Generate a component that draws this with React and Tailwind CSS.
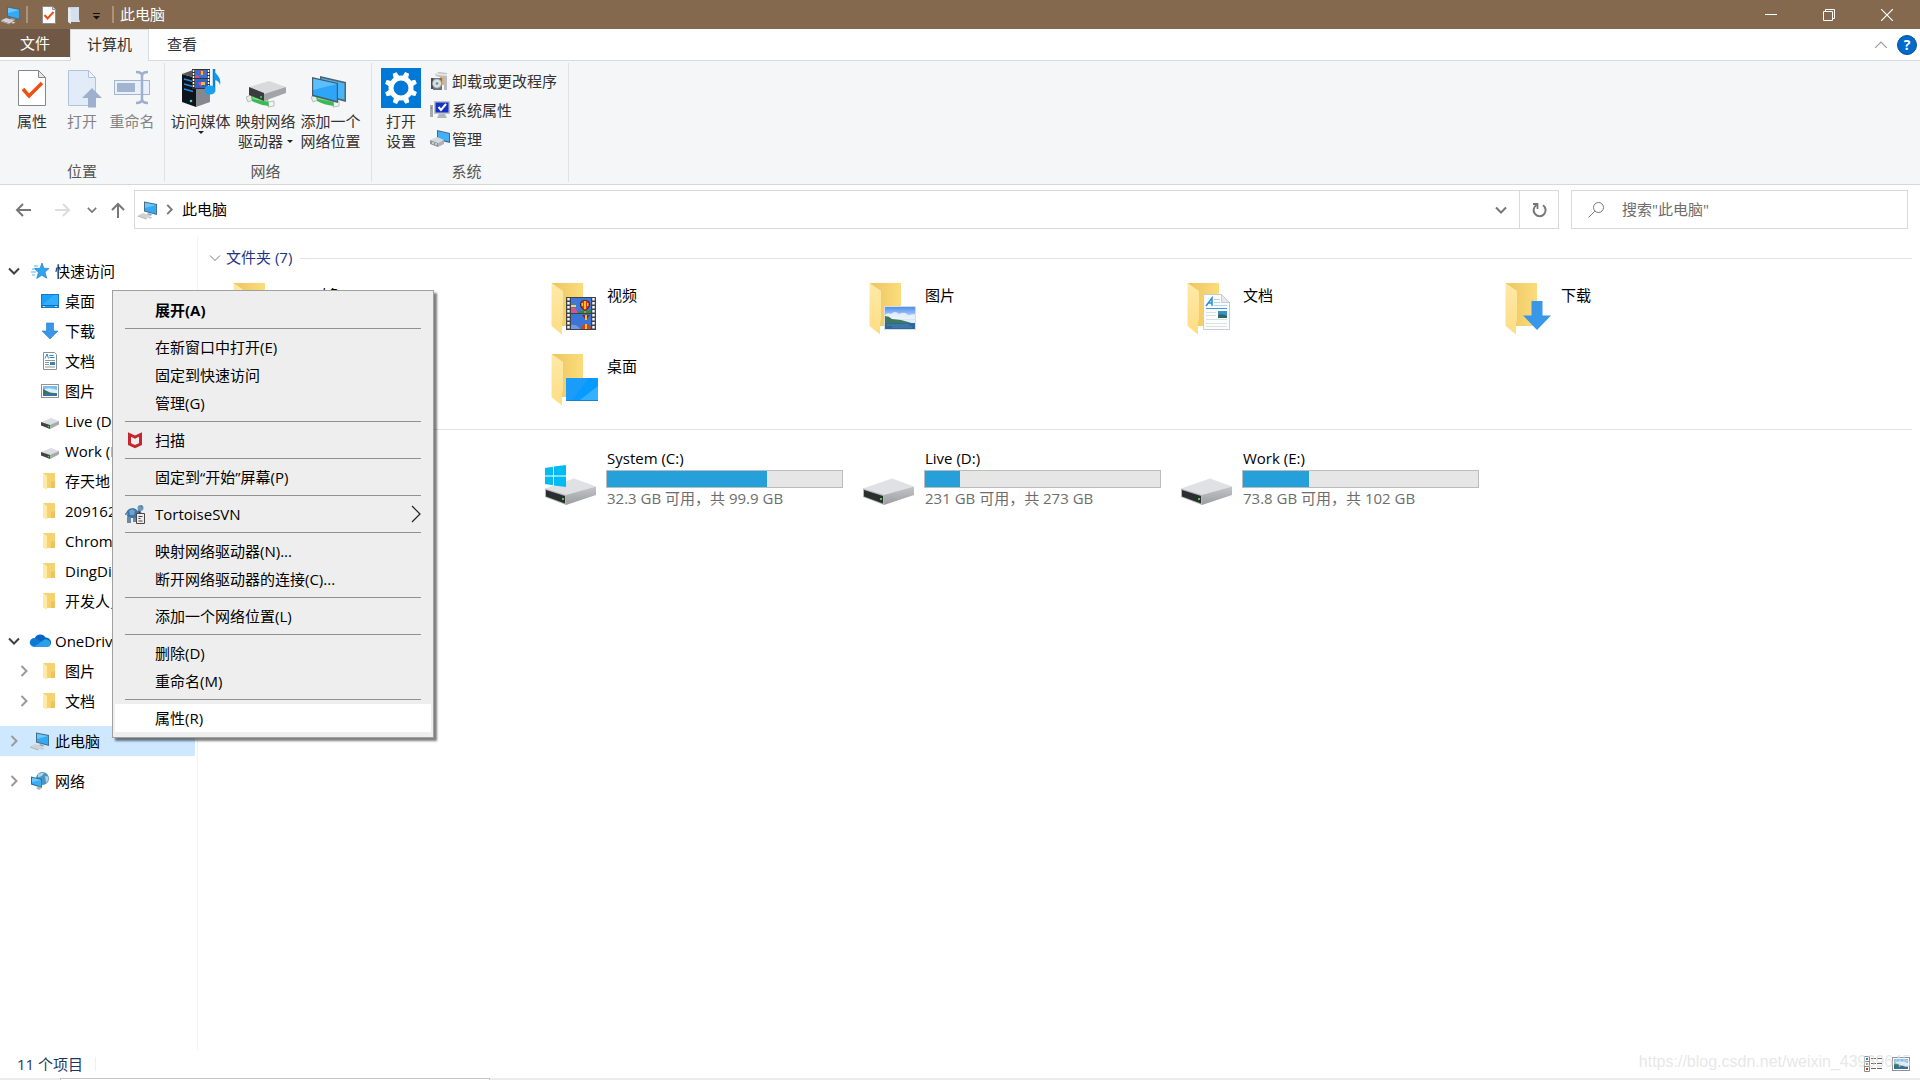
import { useState } from 'react';

/* ---------- small icons ---------- */

const PcIcon = () => (
  <svg width="20" height="20" viewBox="0 0 20 20" className="shrink-0">
    <path d="M6 1.500l13 2.500v11L6 11.500z" fill="#4a6a80" />
    <path d="M7 2.700l11.200 2.200v8.800L7 10.700z" fill="#35a9f5" />
    <path d="M7 2.700l11.200 2.200L7 8z" fill="#6cc6fb" />
    <path d="M10 13l4 1-1 2-4-1z" fill="#9aa7ae" />
    <path d="M0 15.500l5-2.500 8 2.500-4.500 3z" fill="#cfd3d6" />
    <path d="M0 15.500l8.500 3v1L0 16.500z" fill="#a9aeb2" />
    <path d="M11.500 16.500l3 .8-2 1.400-2.500-.8z" fill="#c3c8cc" />
  </svg>
);

const CheckDocIcon = () => (
  <svg width="20" height="20" viewBox="0 0 20 20">
    <path d="M3.500 1.500h10l3 3v14h-13z" fill="#fff" stroke="#8c8c8c" />
    <path d="M13.500 1.500v3h3" fill="#ddd" stroke="#8c8c8c" />
    <path d="M5.500 10l3 3.500 6-6.500" fill="none" stroke="#f04e16" strokeWidth="2" />
  </svg>
);

const PaperFolderIcon = () => (
  <svg width="20" height="20" viewBox="0 0 20 20">
    <path d="M5 2h10v14l1 1H6z" fill="#c3d3e4" />
    <path d="M4 2l3 2v15l-3-2z" fill="#e4edf6" />
    <path d="M7 4l8-2v12l1 3H7z" fill="#d4e0ed" />
  </svg>
);

const StarIcon = () => (
  <svg width="20" height="20" viewBox="0 0 20 20">
    <path d="M12 2l1.800 5.200 5.200.3-4 3.400 1.600 6.300-4.800-3-5 3.300 1.600-5.800L4.500 7.600l5.500-.3z" fill="#2fa4ec" stroke="#1880cc" strokeWidth=".7" />
    <path d="M4 5h4M2 8h3M1 11h5M2 14h3" stroke="#59b5ee" strokeWidth="1" />
  </svg>
);

const DesktopIcon = () => (
  <svg width="20" height="20" viewBox="0 0 20 20">
    <rect x="1.500" y="3.500" width="17" height="13" fill="#1ba1fb" stroke="#1579c4" />
    <path d="M2 14L14 4h4v10z" fill="#35adff" />
    <path d="M2 14.500h16" stroke="#0f6db8" />
    <path d="M3 15.500h2M15 15.500h2" stroke="#fff" strokeWidth=".8" />
  </svg>
);

const DownIcon = () => (
  <svg width="20" height="20" viewBox="0 0 20 20">
    <path d="M6.500 2h7v8h4.500l-8 8-8-8h4.500z" fill="#3a96e8" stroke="#2379c4" strokeWidth=".6" />
  </svg>
);

const DocIcon = () => (
  <svg width="20" height="20" viewBox="0 0 20 20">
    <path d="M3.500 1.500h11l2 2v15h-13z" fill="#fff" stroke="#8a8f94" />
    <path d="M5 7.500L7 3l1.500 4.500M9.500 4.500h4M9.500 6.500h5" fill="none" stroke="#2f8ac4" />
    <path d="M5 9.500h10M5 11.500h4M5 13.500h4M5 16h10" stroke="#8f979e" />
    <rect x="10" y="11" width="5" height="3" fill="#3387b5" />
  </svg>
);

const PictureIcon = () => (
  <svg width="20" height="20" viewBox="0 0 20 20">
    <rect x="1.500" y="3.500" width="17" height="13" fill="#fff" stroke="#8c939a" />
    <rect x="3" y="5" width="14" height="10" fill="#7bbcf3" />
    <path d="M5 8q4-2 12 1v3H3z" fill="#dcefff" />
    <path d="M3 8l7 3.500 7 1v1H3z" fill="#3d7654" />
    <path d="M3 12.500h14V15H3z" fill="#376fa5" />
  </svg>
);

const SmallDriveIcon = () => (
  <svg width="20" height="20" viewBox="0 0 20 20">
    <path d="M1 11l10-4 8 3-9 5z" fill="#dcdde0" />
    <path d="M10 14l9-4v3.500L10 18z" fill="#a7a9ac" />
    <path d="M1 11l9 3v4l-9-3.500z" fill="#444" />
    <circle cx="8.500" cy="15.600" r=".8" fill="#3fd23f" />
  </svg>
);

const SmallFolderIcon = () => (
  <svg width="20" height="20" viewBox="0 0 20 20">
    <path d="M3 2h12v15H3z" fill="#f5d272" />
    <path d="M3 2l4 3v13.500L3 16.500z" fill="#ffe9a6" />
    <path d="M11 11l4-1v7h-4z" fill="#ecc45c" />
  </svg>
);

const CloudIcon = () => (
  <svg width="22" height="20" viewBox="0 0 22 20" className="-mx-px">
    <path d="M5.500 8a6 6 0 0 1 11-1.500 5 5 0 0 1 4 8.500H6z" fill="#0a64c2" />
    <path d="M5 16A4.500 4.500 0 1 1 7.500 7.600L16 13z" fill="#0f7ad6" />
    <path d="M5 16L14 9.500a4.500 4.500 0 0 1 7.400 4A2.800 2.800 0 0 1 19 16z" fill="#28a0ea" />
  </svg>
);

const NetworkIcon = () => (
  <svg width="20" height="20" viewBox="0 0 20 20">
    <circle cx="12.500" cy="7.500" r="6.500" fill="#4f93bf" />
    <path d="M8 3.500q3-2.500 6-1.500l-2 3-4 1.500zM15 5l3 .5q1 4-2 6.500z" fill="#a9d3e8" />
    <path d="M1 5.500l11 2.500v9L1 13.500z" fill="#2d6b8f" />
    <path d="M2 6.700l9.300 2.200v6.800L2 12.700z" fill="#38aef7" />
    <path d="M2 6.700l9.300 2.200L2 11z" fill="#6fc8fb" />
    <path d="M6 17l3-1.500 3 1.200-3 2.300z" fill="#aab4ba" />
  </svg>
);

const DetailsViewIcon = () => (
  <svg width="20" height="20" viewBox="0 0 20 20">
    <path d="M1.500 2.500h5v15h-5zM1.500 7.500h5M1.500 12.500h5" fill="#fff" stroke="#8a8a8a" />
    <path d="M3 4h2v2H3z" fill="#2c82c9" />
    <path d="M3 9h2v2H3z" fill="#a3a15a" />
    <path d="M3 14h2v2H3z" fill="#d92b1c" />
    <path d="M8 4.500h5M14 4.500h5M8 9.500h5M14 9.500h5M8 14.500h5M14 14.500h5" stroke="#666" />
  </svg>
);

const Chevron = ({ dir = 'right', size = 12, color = '#888', width = 1.5 }) => {
  const paths = {
    right: 'M3.500 1l5 5-5 5',
    down: 'M1 3.500l5 5 5-5',
    up: 'M1 8.500l5-5 5 5',
  };
  return (
    <svg width={size} height={size} viewBox="0 0 12 12" className="shrink-0">
      <path d={paths[dir]} fill="none" stroke={color} strokeWidth={width} />
    </svg>
  );
};

/* ---------- ribbon icons, 40px ---------- */

const PropertiesIcon = () => (
  <svg width="40" height="40" viewBox="0 0 40 40">
    <path d="M6.500 2.500h20l7 7v28h-27z" fill="#fff" stroke="#878787" />
    <path d="M26.500 2.500v7h7z" fill="#e8e8e8" stroke="#878787" />
    <path d="M11 21l6 7 13-13" fill="none" stroke="#f0500f" strokeWidth="3.500" />
  </svg>
);

const OpenIcon = () => (
  <svg width="40" height="40" viewBox="0 0 40 40">
    <path d="M6.500 2.500h20l7 7v28h-27z" fill="#e2ecf9" stroke="#b0c2dc" />
    <path d="M26.500 2.500v7h7z" fill="#f0f5fc" stroke="#b0c2dc" />
    <path d="M30 20l10 10h-6v9.500h-8V30h-6z" fill="#9fb0cd" />
  </svg>
);

const RenameIcon = () => (
  <svg width="40" height="40" viewBox="0 0 40 40">
    <rect x="2.500" y="12.500" width="35" height="14" fill="#e8f0fa" stroke="#a3b5d2" />
    <rect x="5" y="15" width="18" height="9" fill="#a3b4d0" />
    <path d="M24 4q6 0 6 4v23q0 4-6 4M36 4q-6 0-6 4v23q0 4 6 4" fill="none" stroke="#9fb0cc" strokeWidth="2.500" />
  </svg>
);

const MediaIcon = () => (
  <svg width="40" height="40" viewBox="0 0 40 40">
    <path d="M1 6l14 4v29L1 34z" fill="#101418" />
    <path d="M15 10l14-3v27l-14 5z" fill="#85888e" />
    <path d="M1 6l11-4 17 5-14 3z" fill="#555a60" />
    <path d="M3 11l9 2.500M3 16l9 2.500M3 21l9 2.500" stroke="#2488e0" strokeWidth="1.500" />
    <circle cx="10" cy="33" r="1.300" fill="#3bd5f2" />
    <rect x="11" y="1" width="18" height="20" fill="#333" />
    <rect x="14" y="2" width="12" height="8" fill="#3c6fd6" />
    <rect x="14" y="11" width="12" height="9" fill="#3263c8" />
    <path d="M18 4q3-3 6 0l-3 4z" fill="#e83f1d" />
    <path d="M14 8q3-2 5 2h-5zM17 15q3-2 5 0l-2 4z" fill="#d9478c" />
    <path d="M20 3h2v4h-2zM20 14h4v3h-4z" fill="#f5c21d" />
    <path d="M12.500 2v18M27.500 2v18" stroke="#fff" strokeWidth="1.500" strokeDasharray="2 1" />
    <path d="M33 1v20" stroke="#0d7fd6" strokeWidth="2.500" />
    <path d="M33 1c0 6 8 6 6 16-1-4-4-5-6-5z" fill="#129ae8" />
    <ellipse cx="29" cy="22" rx="5.500" ry="4.500" fill="#17a0f0" />
  </svg>
);

const Pipe = () => (
  <>
    <path d="M0 29l5-2 2 5-5 2z" fill="#e8ece8" stroke="#aab5aa" strokeWidth=".8" />
    <path d="M22 34l6-1v5l-6 1z" fill="#f1f4f1" stroke="#aab5aa" strokeWidth=".8" />
    <path d="M5 28l17 3 1 7q-10-1-17-5z" fill="#3cb955" />
    <path d="M6 29l16 3v2L7 31z" fill="#82de8f" />
  </>
);

const MapDriveIcon = () => (
  <svg width="40" height="40" viewBox="0 0 40 40">
    <Pipe />
    <path d="M3 19l20-6 17 6-22 7z" fill="#d9dadc" />
    <path d="M18 26l22-7v6l-22 8z" fill="#a2a4a8" />
    <path d="M3 19l15 6v8L3 27z" fill="#3a3c3e" />
    <circle cx="15" cy="29" r="1" fill="#3fe03f" />
  </svg>
);

const AddNetIcon = () => (
  <svg width="40" height="40" viewBox="0 0 40 40">
    <Pipe />
    <path d="M9 8l26 6v20L9 27z" fill="#4e6470" />
    <path d="M10.500 10l23 5.300v16.500L10.500 26z" fill="#49b5f8" />
    <path d="M1 9l26 6v20L1 28z" fill="#465d6b" />
    <path d="M2.300 10.800l23.500 5.300v17L2.300 26.700z" fill="#2fa5f7" />
    <path d="M2.300 10.800l23.500 5.300L2.300 22z" fill="#5cbffb" />
  </svg>
);

const SettingsIcon = () => (
  <svg width="40" height="40" viewBox="0 0 40 40">
    <rect width="40" height="40" fill="#0078d7" />
    <circle cx="20" cy="20" r="10" fill="none" stroke="#fff" strokeWidth="5" />
    {[22, 67, 112, 157, 202, 247, 292, 337].map((a) => (
      <path key={a} d="M17.500 9l.8-4.800h3.400l.8 4.800z" fill="#fff" stroke="#fff" transform={`rotate(${a} 20 20)`} />
    ))}
  </svg>
);

const UninstallIcon = () => (
  <svg width="20" height="20" viewBox="0 0 20 20">
    <path d="M5 3l4-2 8 1v17h-3V7L6 5z" fill="#b9bcc0" />
    <path d="M6 2l11 1v2L6 4z" fill="#e4e5e7" />
    <path d="M10 6h4v8h-4z" fill="#f1a850" />
    <path d="M1 7h3v11H1z" fill="#474d53" />
    <rect x="3" y="7" width="9" height="12" fill="#6b747b" />
    <circle cx="7" cy="12.500" r="4.500" fill="#d8e2e6" stroke="#94a0a6" strokeWidth=".7" />
    <circle cx="7" cy="12.500" r="1.300" fill="#7d878c" />
  </svg>
);

const SystemIcon = () => (
  <svg width="20" height="20" viewBox="0 0 20 20">
    <rect x="0" y="5" width="3" height="12" fill="#a7abae" />
    <path d="M1 8h1" stroke="#31c431" strokeWidth="2" />
    <rect x="4" y="1" width="16" height="13" fill="#bfc3c8" />
    <rect x="5.500" y="2.500" width="13" height="10" fill="#1432c8" />
    <path d="M8.500 7l2.500 3 5-6" fill="none" stroke="#fff" strokeWidth="2" />
    <path d="M9 14h6l2 4H7z" fill="#b3b6ba" />
  </svg>
);

const ManageIcon = () => (
  <svg width="20" height="20" viewBox="0 0 20 20">
    <path d="M7 1l13 3v10L7 11z" fill="#4a6a80" />
    <path d="M8 2.200l11 2.500v7.800L8 10z" fill="#42b0f7" />
    <path d="M0 11l7-3 7 3-6 3z" fill="#d6d9dc" />
    <path d="M0 11l8 3v4l-8-3z" fill="#8f959a" />
    <path d="M8 14l6-3v4l-6 3z" fill="#aeb3b7" />
    <path d="M3 13v2M6 14v2" stroke="#fff" />
  </svg>
);

/* ---------- tile icons ---------- */

const FolderBase = ({ children }) => (
  <svg width="56" height="54" viewBox="0 0 56 54" className="shrink-0">
    <defs>
      <linearGradient id="fback" x1="0" y1="0" x2="1" y2="0">
        <stop offset="0" stopColor="#ecc661" />
        <stop offset="1" stopColor="#fbdc7c" />
      </linearGradient>
      <linearGradient id="ffront" x1="0" y1="0" x2="0" y2="1">
        <stop offset="0" stopColor="#ffe9a8" />
        <stop offset="1" stopColor="#fddd84" />
      </linearGradient>
    </defs>
    <path d="M8 1h31v43H8z" fill="url(#fback)" />
    <path d="M7.500 1L19 9v29l-1 2v12.500L7.500 44z" fill="url(#ffront)" />
    {children}
  </svg>
);

const Landscape = ({ x, y, w, h }) => (
  <svg x={x} y={y} width={w} height={h} viewBox="0 0 32 24" preserveAspectRatio="none">
    <defs>
      <linearGradient id="sky" x1="0" y1="0" x2="0" y2="1">
        <stop offset="0" stopColor="#4f8fee" />
        <stop offset=".6" stopColor="#dceefb" />
      </linearGradient>
    </defs>
    <rect width="32" height="24" fill="#d9dde2" />
    <rect x="1" y="1" width="30" height="22" fill="url(#sky)" />
    <path d="M1 9q3-3 6-1 4-4 8 0 6-3 9 1l7-1v5H1z" fill="#f2f8fd" opacity=".8" />
    <path d="M1 10q4 0 7 3l9 1 14 4H1z" fill="#3f7a58" />
    <path d="M1 17h30v6H1z" fill="#2f679c" />
    <path d="M3 19h22M8 21h20" stroke="#6498c4" strokeWidth=".6" />
  </svg>
);

const Balloon = ({ x, y }) => (
  <g transform={`translate(${x} ${y})`}>
    <path d="M0 4.500a5 4.500 0 0 1 10 0q0 3-4 6H4q-4-3-4-6z" fill="#2b2430" />
    <path d="M1 4.500a4 4 0 0 1 8 0q0 3-3 5.500H4Q1 7.500 1 4.500z" fill="#e0301c" />
    <path d="M4 1h2v8H4zM1.500 3h1.500v3H1.500zM7 3h1.500v3H7z" fill="#f7c21c" />
    <path d="M4 11h2v2H4z" fill="#c98a1c" />
  </g>
);

const overlays = {
  video: (
    <g>
      <rect x="22" y="15" width="30" height="33" fill="#3e4145" />
      <rect x="27" y="16" width="20" height="15" fill="#3f78d8" />
      <path d="M27 23h5v2h-5z" fill="#f3d84a" />
      <path d="M27 26q4-2 7 5h-7z" fill="#d2568c" />
      <path d="M33 31l3-2 11-1v3z" fill="#2f8a45" />
      <rect x="27" y="32" width="20" height="15" fill="#3b74d4" />
      <path d="M27 43q6-1 9 4h-9z" fill="#7299dd" />
      <Balloon x={36} y={18} />
      <path d="M38 33h8l-4 5z" fill="#8c1f1c" />
      <path d="M41 33h2v5h-2z" fill="#f7c21c" />
      <path d="M37 47a5 5 0 0 1 10 0z" fill="#d8401c" />
      <path d="M41 42h2v5h-2z" fill="#f7c21c" />
      <path d="M24.500 16v31M49.500 16v31" stroke="#f5f5f5" strokeWidth="2.500" strokeDasharray="2.500 1.500" />
    </g>
  ),
  picture: <Landscape x={22} y={24} w={32} h={24} />,
  document: (
    <g>
      <path d="M23.500 12.500h18l8 8v27h-26z" fill="#fbfcfd" stroke="#c9cdd1" />
      <path d="M41.500 12.500v8h8z" fill="#e6e9ec" stroke="#c9cdd1" />
      <path d="M26 24l6-8v8M28 21h4" fill="none" stroke="#2a8fd0" strokeWidth="1.500" />
      <path d="M34 17.500h6M34 20.500h6M34 23.500h13" stroke="#b5d7ee" />
      <path d="M26 26.500h21" stroke="#3b9bd8" />
      <path d="M26 30.500h10M26 33.500h10M26 37.500h21M26 41.500h21M26 44.500h21" stroke="#dde0e3" />
      <rect x="38" y="29" width="9" height="7" fill="#3a8fc8" />
      <path d="M38 33q4-2 9 1v2h-9z" fill="#2d6a5c" />
    </g>
  ),
  download: <path d="M33.500 19h11v14.500H53l-14 14.500-14-14.500h8.500z" fill="#3997ea" />,
  desktop: (
    <g>
      <rect x="22" y="25" width="32" height="23" fill="#1a9cf8" />
      <path d="M28 47l17-22h9v22z" fill="#079bff" />
      <path d="M36 47l18-14v14z" fill="#35b0ff" />
      <path d="M22 47.500h32" stroke="#1f7fc4" />
    </g>
  ),
};

const DriveIcon = ({ windows }) => (
  <svg width="56" height="60" viewBox="0 0 56 60" className="shrink-0">
    <defs>
      <linearGradient id="side" x1="0" y1="0" x2="0" y2="1">
        <stop offset="0" stopColor="#c4c5c8" />
        <stop offset="1" stopColor="#9b9da0" />
      </linearGradient>
    </defs>
    <path d="M1 39.500L30 29.500 52 37.500 22 46.500z" fill="#e0e1e5" />
    <path d="M22 46L52 37.500V46L22 56z" fill="url(#side)" />
    <path d="M1 39.500L22 46v10L1 48z" fill="#b5b6b9" />
    <path d="M2 41l19 6v7.500L2 47.500z" fill="#2b2d2e" />
    <rect x="18" y="49" width="2" height="2" fill="#35d835" />
    {windows && (
      <path d="M1 19l8-1.300v8.800H1zM10 17.500L22 16v10.500H10zM1 27.500h8v8.800L1 35zM10 27.500h12V38l-12-1.500z" fill="#00bcf2" />
    )}
  </svg>
);

/* ---------- menu icons ---------- */

const McAfeeIcon = () => (
  <svg width="20" height="20" viewBox="0 0 20 20">
    <path d="M4.500 4.500L10 7l5.500-2.500v9.500L10 16.500 4.500 14z" fill="none" stroke="#c4282e" strokeWidth="3" />
  </svg>
);

const TortoiseIcon = () => (
  <svg width="20" height="20" viewBox="0 0 20 20">
    <path d="M1 9q2-5 7-5 5 1 6 6l-3 4H3z" fill="#3f74a8" />
    <path d="M4 7l3-2 3 2-1 4H5z" fill="#72a1cc" />
    <circle cx="15.500" cy="4" r="3" fill="#6f97b8" />
    <path d="M16 2h1v1h-1zM13 6l3 2-2 4" fill="#22384c" stroke="#57809f" />
    <path d="M2 13h4v6H2zM8 14h3v4H8z" fill="#6a8aa3" />
    <path d="M0 9h3v2H0z" fill="#7192ab" />
    <path d="M11.500 9.500h8v10h-8z" fill="#ededed" stroke="#4c4545" />
    <path d="M13.500 12.500h4M13.500 14.500h2M13.500 17h4" stroke="#4c4545" />
  </svg>
);

/* ---------- data ---------- */

const quickItems = [
  { label: '桌面', icon: DesktopIcon },
  { label: '下载', icon: DownIcon },
  { label: '文档', icon: DocIcon },
  { label: '图片', icon: PictureIcon },
  { label: 'Live (D:)', icon: SmallDriveIcon },
  { label: 'Work (E:)', icon: SmallDriveIcon },
  { label: '存天地', icon: SmallFolderIcon },
  { label: '209162', icon: SmallFolderIcon },
  { label: 'Chrome', icon: SmallFolderIcon },
  { label: 'DingDing', icon: SmallFolderIcon },
  { label: '开发人员', icon: SmallFolderIcon },
];

const folders = [
  { name: '3D 对象' },
  { name: '视频', overlay: 'video' },
  { name: '图片', overlay: 'picture' },
  { name: '文档', overlay: 'document' },
  { name: '下载', overlay: 'download' },
  { name: '音乐' },
  { name: '桌面', overlay: 'desktop' },
];

const drives = [
  { name: 'System (C:)', free: '32.3 GB', total: '99.9 GB', used: 68, windows: true },
  { name: 'Live (D:)', free: '231 GB', total: '273 GB', used: 15 },
  { name: 'Work (E:)', free: '73.8 GB', total: '102 GB', used: 28 },
];

const menuGroups = [
  [{ label: '展开(A)', bold: true }],
  [{ label: '在新窗口中打开(E)' }, { label: '固定到快速访问' }, { label: '管理(G)' }],
  [{ label: '扫描', icon: McAfeeIcon }],
  [{ label: '固定到“开始”屏幕(P)' }],
  [{ label: 'TortoiseSVN', icon: TortoiseIcon, sub: true }],
  [{ label: '映射网络驱动器(N)...' }, { label: '断开网络驱动器的连接(C)...' }],
  [{ label: '添加一个网络位置(L)' }],
  [{ label: '删除(D)' }, { label: '重命名(M)' }],
  [{ label: '属性(R)' }],
];

/* ---------- pieces ---------- */

function TitleBar() {
  return (
    <header className="flex h-[29px] items-center bg-[#84694e] text-white">
      <div className="ml-px"><PcIcon /></div>
      <span className="ml-[5px] h-[17px] w-[2px] bg-[#a8937d]" />
      <button aria-label="属性" className="ml-[11px]"><CheckDocIcon /></button>
      <button aria-label="新建文件夹" className="ml-[5px]"><PaperFolderIcon /></button>
      <button aria-label="自定义快速访问工具栏" className="ml-1">
        <svg width="16" height="16" viewBox="0 0 16 16">
          <path d="M5 6.500h7" stroke="#111" />
          <path d="M5 9h7l-3.500 3.500z" fill="#111" />
        </svg>
      </button>
      <span className="ml-2 h-[17px] w-[2px] bg-[#a8937d]" />
      <h1 className="ml-[6px] pb-[2px]">此电脑</h1>
      <div className="mr-1 ml-auto flex">
        <button aria-label="最小化" className="flex h-[29px] w-[58px] items-center justify-center">
          <svg width="12" height="12"><path d="M0 5.500h12" stroke="#fff" /></svg>
        </button>
        <button aria-label="还原" className="flex h-[29px] w-[58px] items-center justify-center">
          <svg width="12" height="12"><path d="M.5 2.500h9v9h-9zM2.500 2.500v-2h9v9h-2" fill="none" stroke="#fff" /></svg>
        </button>
        <button aria-label="关闭" className="flex h-[29px] w-[58px] items-center justify-center">
          <svg width="12" height="12"><path d="M0 0l12 12M12 0L0 12" stroke="#fff" strokeWidth="1.200" /></svg>
        </button>
      </div>
    </header>
  );
}

function Tabs() {
  return (
    <nav className="flex h-8 border-b border-[#dadbdc] bg-white text-[#333]">
      <button className="h-7 w-[70px] bg-[#6f5845] text-white">文件</button>
      <button className="-mb-px h-8 w-[79px] border-x border-t border-[#dadbdc] bg-[#f5f6f7] pb-[3px]">计算机</button>
      <button className="h-[30px] w-[66px]">查看</button>
      <div className="mr-[3px] ml-auto flex items-center gap-[9px]">
        <button aria-label="最小化功能区"><Chevron dir="up" size={14} color="#9a9a9a" width={1} /></button>
        <button aria-label="帮助" className="h-5 w-5 rounded-full border border-[#0a4f8f] bg-[#0069cc] text-sm leading-4 font-bold text-white">?</button>
      </div>
    </nav>
  );
}

function RibbonButton({ icon, lines, width = 'w-[50px]', disabled, arrow }) {
  return (
    <button disabled={disabled} className={`flex ${width} flex-col items-center pt-[2px] whitespace-nowrap ${disabled ? 'text-[#838383]' : ''}`}>
      {icon}
      <span className="mt-[3px] leading-5">{lines[0]}</span>
      {lines[1] && (
        <span className="flex items-center gap-1 leading-5">
          {lines[1]}
          {arrow === 'inline' && <DropArrow />}
        </span>
      )}
      {arrow === 'below' && <DropArrow />}
    </button>
  );
}

const DropArrow = () => (
  <svg width="6" height="3" viewBox="0 0 6 3" className="shrink-0"><path d="M0 0h6L3 3z" fill="#222" /></svg>
);

function RibbonGroup({ label, className, children }) {
  return (
    <section className={`mt-[2px] mb-[2px] flex flex-col border-r border-[#dfe1e2] ${className}`}>
      <div className="flex grow pt-[3px]">{children}</div>
      <div className="pb-px text-center leading-5 text-[#555]">{label}</div>
    </section>
  );
}

function Ribbon() {
  return (
    <div className="flex h-[124px] border-b border-[#d5d7d8] bg-[#f5f6f7] text-[#333]">
      <RibbonGroup label="位置" className="px-[7px]">
        <RibbonButton icon={<PropertiesIcon />} lines={['属性']} />
        <RibbonButton icon={<OpenIcon />} lines={['打开']} disabled />
        <RibbonButton icon={<RenameIcon />} lines={['重命名']} disabled />
      </RibbonGroup>
      <RibbonGroup label="网络" className="pr-2 pl-[3px]">
        <RibbonButton icon={<MediaIcon />} lines={['访问媒体']} width="w-[65px]" arrow="below" />
        <RibbonButton icon={<MapDriveIcon />} lines={['映射网络', '驱动器']} width="w-[65px]" arrow="inline" />
        <RibbonButton icon={<AddNetIcon />} lines={['添加一个', '网络位置']} width="w-[65px]" />
      </RibbonGroup>
      <RibbonGroup label="系统" className="pr-[11px] pl-1">
        <RibbonButton icon={<SettingsIcon />} lines={['打开', '设置']} />
        <div className="ml-1 flex flex-col">
          <button className="flex h-[29px] items-center gap-[2px] whitespace-nowrap"><UninstallIcon />卸载或更改程序</button>
          <button className="flex h-[29px] items-center gap-[2px] whitespace-nowrap"><SystemIcon />系统属性</button>
          <button className="flex h-[29px] items-center gap-[2px] whitespace-nowrap"><ManageIcon />管理</button>
        </div>
      </RibbonGroup>
    </div>
  );
}

function AddressRow() {
  const [query, setQuery] = useState('');

  return (
    <div className="flex items-center pt-[5px] pr-3 pl-[15px]">
      <button aria-label="后退">
        <svg width="18" height="18" viewBox="0 0 18 18"><path d="M16 9H2M8 3L2 9l6 6" fill="none" stroke="#777" strokeWidth="2" /></svg>
      </button>
      <button aria-label="前进" className="ml-5">
        <svg width="18" height="18" viewBox="0 0 18 18"><path d="M2 9h14M10 3l6 6-6 6" fill="none" stroke="#ddd" strokeWidth="2" /></svg>
      </button>
      <button aria-label="最近浏览的位置" className="ml-4"><Chevron dir="down" size={10} color="#777" width={2} /></button>
      <button aria-label="向上" className="ml-3">
        <svg width="18" height="18" viewBox="0 0 18 18"><path d="M9 17V3M3 9l6-6 6 6" fill="none" stroke="#777" strokeWidth="2" /></svg>
      </button>
      <div className="ml-[7px] flex h-[39px] grow items-center border border-[#d9d9d9] bg-white">
        <span className="ml-[3px]"><PcIcon /></span>
        <span className="ml-[6px]"><Chevron size={11} color="#777" width={2} /></span>
        <button className="ml-[7px] pb-[2px]">此电脑</button>
        <button aria-label="上一个位置" className="mr-3 ml-auto"><Chevron dir="down" size={12} color="#777" width={2} /></button>
        <button aria-label="刷新" className="flex h-full w-[39px] items-center justify-center border-l border-[#d9d9d9]">
          <svg width="16" height="16" viewBox="0 0 16 16">
            <path d="M5.500 3A6 6 0 1 0 12 3.200" fill="none" stroke="#777" strokeWidth="2" />
            <path d="M2 2h4.500v5" fill="none" stroke="#777" strokeWidth="1.800" />
          </svg>
        </button>
      </div>
      <label className="ml-3 flex h-[39px] w-[337px] items-center border border-[#d9d9d9] bg-white pl-[15px]">
        <svg width="18" height="18" viewBox="0 0 18 18" className="shrink-0">
          <circle cx="11.500" cy="6.500" r="5" fill="none" stroke="#777" />
          <path d="M7.800 10.200L1.500 16.500" stroke="#777" />
        </svg>
        <input value={query} onChange={(e) => setQuery(e.target.value)} aria-label="搜索" placeholder={'搜索"此电脑"'}
          className="ml-[17px] w-full pb-[2px] outline-none placeholder:text-[#6d6d6d]" />
      </label>
    </div>
  );
}

function TreeRow({ label, icon: Icon, level = 1, state, selected }) {
  return (
    <button className={`mr-[2px] flex h-[30px] items-center whitespace-nowrap ${level === 1 ? 'pl-1' : 'pl-[14px]'} ${selected ? 'bg-[#cde8ff]' : ''}`}>
      <span className="flex w-5 justify-center">
        {state === 'open' && <Chevron dir="down" size={12} color="#404040" width={2} />}
        {state === 'closed' && <Chevron size={12} color="#9a9a9a" width={2} />}
      </span>
      <span className="ml-[6px] w-5"><Icon /></span>
      <span className="ml-[5px]">{label}</span>
    </button>
  );
}

function Sidebar() {
  return (
    <aside className="mt-2 flex w-[198px] shrink-0 flex-col overflow-hidden border-r border-[#f3f3f3] pt-[19px]">
      <TreeRow label="快速访问" icon={StarIcon} state="open" />
      {quickItems.map((item) => <TreeRow key={item.label} {...item} level={2} />)}
      <div className="mt-[10px] flex flex-col">
        <TreeRow label="OneDrive" icon={CloudIcon} state="open" />
        <TreeRow label="图片" icon={SmallFolderIcon} level={2} state="closed" />
        <TreeRow label="文档" icon={SmallFolderIcon} level={2} state="closed" />
      </div>
      <div className="mt-[10px] flex flex-col gap-[10px]">
        <TreeRow label="此电脑" icon={PcIcon} state="closed" selected />
        <TreeRow label="网络" icon={NetworkIcon} state="closed" />
      </div>
    </aside>
  );
}

function SectionHeader({ children }) {
  return (
    <h2 className="flex h-5 items-center text-[#1e3287]">
      <Chevron dir="down" size={12} color="#777" width={1} />
      <span className="ml-[5px] pb-[2px]">{children}</span>
      <span className="ml-2 h-px grow bg-[#e2e2e2]" />
    </h2>
  );
}

function Content() {
  return (
    <main className="grow pt-[19px] pr-2 pl-[11px]">
      <SectionHeader>文件夹 (7)</SectionHeader>
      <ul className="mt-[14px] ml-[17px] grid grid-cols-[repeat(auto-fill,318px)] gap-y-[10px]">
        {folders.map((f) => (
          <li key={f.name} className="flex h-[61px]">
            <FolderBase>{overlays[f.overlay]}</FolderBase>
            <span className="mt-[3px] ml-[7px] leading-5">{f.name}</span>
          </li>
        ))}
      </ul>
      <div className="mt-[5px]"><SectionHeader>设备和驱动器 (4)</SectionHeader></div>
      <ul className="mt-[10px] ml-[17px] grid grid-cols-[repeat(auto-fill,318px)]">
        {drives.map((d) => (
          <li key={d.name} className="flex first:col-start-2">
            <DriveIcon windows={d.windows} />
            <div className="ml-[6px] w-[237px]">
              <div className="ml-px pb-[2px] leading-[18px]">{d.name}</div>
              <div className="mt-px h-[18px] border border-[#bcbcbc] bg-[#e6e6e6]">
                <div className="h-full bg-[#26a0da]" style={{ width: `${d.used}%` }} />
              </div>
              <div className="ml-px leading-5 text-[#6d6d6d]">{d.free} 可用，共 {d.total}</div>
            </div>
          </li>
        ))}
      </ul>
    </main>
  );
}

function ContextMenu() {
  return (
    <div role="menu" className="absolute top-[290px] left-28 w-[322px] border border-[#a0a0a0] bg-[#eeeeee] px-[2px] py-[5px] shadow-[3px_3px_2px_rgba(0,0,0,0.5)]">
      {menuGroups.map((group, i) => (
        <div key={group[0].label}>
          {i > 0 && <div className="mx-[10px] my-1 h-px bg-[#919191]" />}
          {group.map(({ label, icon: Icon, bold, sub }) => (
            <button key={label} role="menuitem"
              className={`flex h-7 w-full items-center pb-px pl-[10px] ${bold ? 'font-bold' : ''} ${label === '属性(R)' ? 'bg-white' : ''}`}>
              <span className="w-[30px]">{Icon && <Icon />}</span>
              {label}
              {sub && (
                <svg width="12" height="18" viewBox="0 0 12 18" className="mr-[9px] ml-auto">
                  <path d="M2 1l8 8-8 8" fill="none" stroke="#222" strokeWidth="1.200" />
                </svg>
              )}
            </button>
          ))}
        </div>
      ))}
    </div>
  );
}

function StatusBar() {
  return (
    <footer>
      <div className="relative flex h-7 items-center pr-[9px] pl-[17px] text-[#1e395b]">
        <span>11 个项目</span>
        <span className="ml-3 h-[14px] w-px bg-[#f0f0f0]" />
        <div className="ml-auto flex gap-2">
          <button aria-label="详细信息"><DetailsViewIcon /></button>
          <button aria-label="大图标"><PictureIcon /></button>
        </div>
        <span className="absolute right-[9px] bottom-1 font-['Liberation_Sans',sans-serif] text-base leading-6 text-[#dddddd]/70">https://blog.csdn.net/weixin_43939645</span>
      </div>
      <div className="flex h-[2px] bg-[#ebebeb]">
        <div className="ml-[60px] w-[430px] border-x border-t border-[#c4c4c4] bg-white" />
      </div>
    </footer>
  );
}

export default function App() {
  return (
    <div className="relative flex min-h-screen flex-col bg-white font-['Open_Sans','Noto_Sans_CJK_SC',sans-serif] text-[15px] leading-5 text-black">
      <TitleBar />
      <Tabs />
      <Ribbon />
      <AddressRow />
      <div className="flex grow">
        <Sidebar />
        <Content />
      </div>
      <StatusBar />
      <ContextMenu />
    </div>
  );
}
